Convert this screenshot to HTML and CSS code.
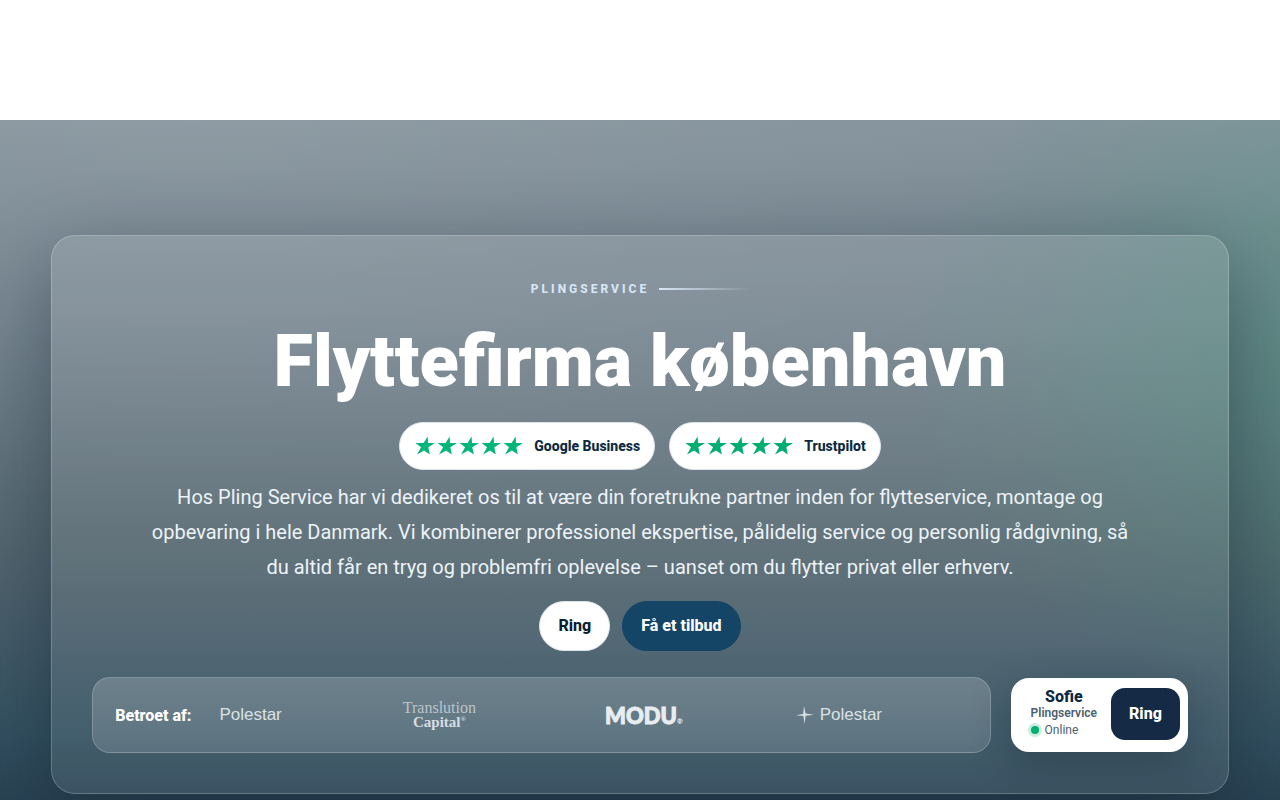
FILE: index.html
```
<!DOCTYPE html>
<html lang="da">
<head>
	<title>Flyttefirma københavn</title>
	<meta charset="utf-8">
	<meta name="viewport" content="width=device-width, initial-scale=1">
	<link rel="stylesheet" href="styles.css">
</head>
<body>
	<svg class="defs" aria-hidden="true">
		<symbol id="stars" viewBox="0 0 108 20">
			<path id="star" transform="translate(9 10)" d="M2.6-9.6 3-3.1 10-3.1 3.3 1.2 4.8 8.6-1 4.4-8 8.6-3.9 1.2-9.4-2.9-1.4-3.1Z"/>
			<use href="#star" x="22"/>
			<use href="#star" x="44"/>
			<use href="#star" x="66"/>
			<use href="#star" x="88"/>
		</symbol>
	</svg>
	<header class="top"></header>
	<main class="hero">
		<section class="panel">
			<p class="eyebrow">Plingservice</p>
			<h1>Flyttefirma københavn</h1>
			<div class="badges">
				<a class="badge" href="#google">
					<svg class="stars" aria-hidden="true"><use href="#stars"/></svg>
					Google Business
				</a>
				<a class="badge trustpilot" href="#trustpilot">
					<svg class="stars" aria-hidden="true"><use href="#stars"/></svg>
					Trustpilot
				</a>
			</div>
			<p class="lead">Hos Pling Service har vi dedikeret os til at være din foretrukne partner inden for flytteservice, montage og opbevaring i hele Danmark. Vi kombinerer professionel ekspertise, pålidelig service og personlig rådgivning, så du altid får en tryg og problemfri oplevelse – uanset om du flytter privat eller erhverv.</p>
			<div class="actions">
				<a class="btn light" href="#ring">Ring</a>
				<a class="btn dark" href="#tilbud">Få et tilbud</a>
			</div>
			<div class="bottom">
				<div class="trust">
					<strong>Betroet af:</strong>
					<ul class="logos">
						<li class="polestar">Polestar</li>
						<li class="translution"><span>Translution</span><b>Capital<sup>®</sup></b></li>
						<li class="modu">MODU<small>®</small></li>
						<li class="polestar">
							<svg width="18" height="18" viewBox="0 0 18 18" aria-hidden="true">
								<path d="M8 0 9.6 7.6 18 8.8 9.6 9.8 8.6 18 7.4 10 0 9.2 7.2 8Z"/>
							</svg>
							Polestar
						</li>
					</ul>
				</div>
				<aside class="contact">
					<div class="who">
						<strong>Sofie</strong>
						<span class="company">Plingservice</span>
						<span class="status">Online</span>
					</div>
					<a class="call" href="#ring">Ring</a>
				</aside>
			</div>
		</section>
	</main>
</body>
</html>
```

FILE: styles.css
```
:root{
	--ink: #0b2a3f;
	--navy: #142a45;
	--blue: #144466;
	--green: #00b67a;
	--line: rgba(255, 255, 255, 0.2);
}
*{
	margin: 0;
	padding: 0;
	box-sizing: border-box;
}
body{
	background: white;
	color: white;
	font-family: Roboto, sans-serif;
	font-size: 16px;
}
a{
	color: inherit;
	text-decoration: none;
}
strong{
	font-weight: 800;
}
.defs{
	display: none;
}
.top{
	height: 120px;
}
.hero{
	padding: 115px 4% 96px;
	background:
		radial-gradient(440px 360px at 105% 30%, rgba(52, 160, 120, 0.32), transparent),
		radial-gradient(900px 400px at 15% 0%, rgba(255, 255, 255, 0.07), transparent),
		linear-gradient(180deg, #86949d 0%, #74838e 25%, #54666f 55%, #335060 80%, #1d3042 100%);
}
.panel{
	padding: 40px;
	border: 1px solid var(--line);
	border-radius: 24px;
	background: linear-gradient(180deg, rgba(255, 255, 255, 0.1), rgba(255, 255, 255, 0.08));
	box-shadow: 0 24px 80px rgba(10, 25, 40, 0.4);
	text-align: center;
}
.eyebrow{
	display: flex;
	align-items: center;
	justify-content: center;
	gap: 10px;
	color: #d6e6f5;
	font-size: 12px;
	font-weight: 800;
	line-height: 26px;
	letter-spacing: 3px;
	text-transform: uppercase;
}
.eyebrow::after{
	content: "";
	width: 90px;
	height: 2px;
	background: linear-gradient(90deg, #d6e6f5, transparent);
}
h1{
	margin: 20px 0;
	font-size: 72px;
	font-weight: 900;
	line-height: 80px;
}
.badges{
	display: flex;
	flex-wrap: wrap;
	justify-content: center;
	gap: 14px;
}
.badge{
	display: flex;
	align-items: center;
	gap: 10px;
	height: 48px;
	padding: 0 14px 0 16px;
	border: 1px solid #dde4ec;
	border-radius: 24px;
	background: white;
	color: var(--ink);
	font-size: 14px;
	font-weight: 800;
}
.stars{
	width: 108px;
	height: 20px;
	fill: var(--green);
}
.trustpilot .stars{
	fill: #00ae72;
}
.lead{
	max-width: 1000px;
	margin: 10px auto 16px;
	color: #edf3f8;
	font-size: 20px;
	line-height: 35px;
}
.actions{
	display: flex;
	justify-content: center;
	gap: 12px;
}
.btn{
	padding: 0 18px;
	border: 1px solid var(--blue);
	border-radius: 25px;
	background: var(--blue);
	font-weight: 800;
	line-height: 48px;
}
.btn.light{
	border-color: #dde4ec;
	background: white;
	color: #0b1f2e;
}
.bottom{
	display: flex;
	align-items: center;
	gap: 20px;
	margin-top: 26px;
}
.trust{
	display: flex;
	flex: 1;
	align-items: center;
	gap: 28px;
	height: 76px;
	padding: 0 22px;
	border: 1px solid var(--line);
	border-radius: 18px;
	background: linear-gradient(180deg, rgba(255, 255, 255, 0.19), rgba(255, 255, 255, 0.14));
}
.logos{
	display: flex;
	align-items: center;
	gap: 113px;
	list-style: none;
	color: #e8edf0;
}
.polestar{
	display: flex;
	align-items: center;
	gap: 6px;
	color: #dbe1e4;
	font-family: "Liberation Sans", sans-serif;
	font-size: 17px;
}
.polestar svg{
	fill: currentColor;
}
.translution{
	padding: 0 16px 0 8px;
	color: #bac4ca;
	font-family: "Liberation Serif", serif;
	font-size: 16px;
	line-height: 14px;
}
.translution span, .translution b{
	display: block;
}
.translution b{
	color: #d7dee2;
	font-size: 15px;
}
.translution sup{
	font-size: 7px;
	line-height: 1;
}
.modu{
	font-family: Lato, sans-serif;
	font-size: 22px;
	font-weight: 900;
	-webkit-text-stroke: 1px #e8edf0;
}
.modu small{
	font-size: 7px;
	-webkit-text-stroke: 0;
}
.contact{
	display: flex;
	align-items: center;
	gap: 14px;
	padding: 10px 8px 12px 20px;
	border-radius: 18px;
	background: white;
	box-shadow: 0 12px 40px rgba(10, 25, 35, 0.3);
	color: var(--ink);
}
.who{
	display: grid;
}
.who strong{
	line-height: 18px;
}
.company{
	color: #4a5f70;
	font-size: 12px;
	font-weight: 600;
	line-height: 14px;
}
.status{
	display: flex;
	align-items: center;
	gap: 6px;
	color: #4a5f70;
	font-size: 12px;
	line-height: 20px;
}
.status::before{
	content: "";
	width: 8px;
	height: 8px;
	border-radius: 50%;
	background: #00ae72;
	box-shadow: 0 0 0 3px #c9eee0;
}
.call{
	padding: 0 18px;
	border-radius: 14px;
	background: var(--navy);
	color: white;
	font-weight: 800;
	line-height: 52px;
}
@media (max-width: 900px){
	h1{
		font-size: 44px;
		line-height: 50px;
	}
	.bottom{
		flex-direction: column;
	}
	.trust, .logos{
		flex-wrap: wrap;
		height: auto;
		gap: 20px;
	}
}
```
